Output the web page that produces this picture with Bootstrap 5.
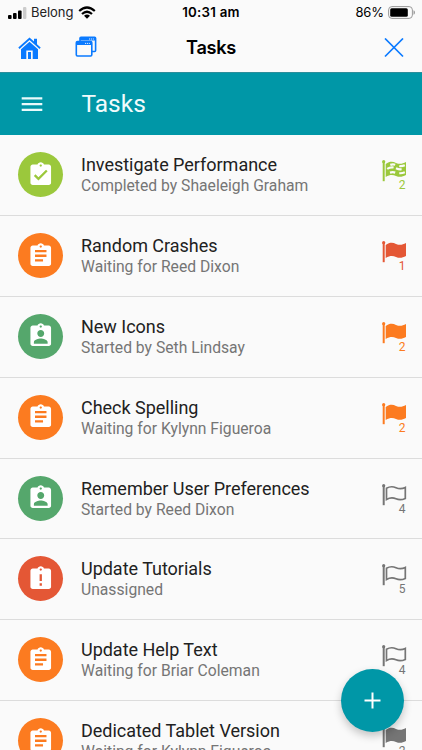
<!DOCTYPE html>
<html lang="en">
<head>
<meta charset="utf-8">
<meta name="viewport" content="width=device-width, initial-scale=1">
<title>Tasks</title>
<link href="https://cdn.jsdelivr.net/npm/bootstrap@5.3.0/dist/css/bootstrap.min.css" rel="stylesheet">
<style>
html,body{height:100%;overflow:hidden}
body{font-family:Roboto,sans-serif;background:#fafafa;color:#212121}
svg{display:block;flex:none}
.screen{height:750px;overflow:hidden}
.ios{font-family:Inter,sans-serif;color:#000}
.statusbar{height:24px;padding:1px 7px 0 8px;font-size:13px}
.carrier{letter-spacing:-.05px;color:#222;margin:0 5px 0 4px}
.clock{font-weight:600;font-size:13.3px;letter-spacing:.25px;left:0;right:0;top:2.5px}
.battery-level{letter-spacing:-.1px}
.titlebar{height:48px;padding:0 18px;color:#0a7aff}
.bar-title{font-weight:600;font-size:18.2px;letter-spacing:-.3px;color:#000;left:0;right:0;top:10px}
.appbar{height:63px;background:#0097a7;padding-left:20px;box-shadow:inset 0 1px #2b8e9b}
.app-title{font-size:24.5px;line-height:1;margin-left:37.5px;padding-top:1px;color:#f1fbfc}
.task{height:80.9px;padding:0 15.500px 1px 18px;border-bottom:1.4px solid #dcdcdc}
.disc{width:45px;height:45px;flex:none}
.task-text{margin-left:18px;flex:1;margin-top:1px}
.task-name{font-size:18px;line-height:21px;letter-spacing:-.02px;white-space:nowrap}
.task-state{font-size:15.7px;line-height:21px;color:#757575;white-space:nowrap}
.flag{width:25px;height:32px;margin-top:3px}
.count{font-size:12px;line-height:12px;margin-top:-3px;text-align:right;padding-right:1px}
.done{background:#9bc83c}.waiting{background:#fc7b20}.started{background:#55a76c}.late{background:#e45735}
.c-done{color:#9bc83c}.c-red{color:#e45735}.c-orange{color:#fc7b20}.c-gray{color:#757575}
.windows-icon{left:75px;top:12px}
.fab{width:63px;height:63px;right:18.5px;top:668.5px;background:#0097a7;border:0;color:#fff;box-shadow:0 4px 8px rgba(0,0,0,.22)}
</style>
<script src="https://cdn.jsdelivr.net/npm/bootstrap@5.3.0/dist/js/bootstrap.bundle.min.js"></script>
</head>
<body>
<svg width="0" height="0" class="position-absolute">
<defs>
<symbol id="i-list" viewBox="0 0 24 24"><path d="M19 3h-4.180C14.400 1.840 13.300 1 12 1c-1.300 0-2.400.84-2.820 2H5c-1.100 0-2 .9-2 2v14c0 1.100.9 2 2 2h14c1.100 0 2-.9 2-2V5c0-1.100-.9-2-2-2zm-7 0c.55 0 1 .45 1 1s-.45 1-1 1-1-.45-1-1 .45-1 1-1zm2 14H7v-2h7v2zm3-4H7v-2h10v2zm0-4H7V7h10v2z"/></symbol>
<symbol id="i-check" viewBox="0 0 24 24"><path d="M19 3h-4.180C14.400 1.840 13.300 1 12 1c-1.300 0-2.400.84-2.820 2H5c-1.100 0-2 .9-2 2v14c0 1.100.9 2 2 2h14c1.100 0 2-.9 2-2V5c0-1.100-.9-2-2-2zm-7 0c.55 0 1 .45 1 1s-.45 1-1 1-1-.45-1-1 .45-1 1-1zm-2 14l-4-4 1.410-1.410L10 14.170l6.590-6.590L18 9l-8 8z"/></symbol>
<symbol id="i-user" viewBox="0 0 24 24"><path d="M19 3h-4.180C14.400 1.840 13.300 1 12 1c-1.300 0-2.400.84-2.820 2H5c-1.100 0-2 .9-2 2v14c0 1.100.9 2 2 2h14c1.100 0 2-.9 2-2V5c0-1.100-.9-2-2-2zm-7 0c.55 0 1 .45 1 1s-.45 1-1 1-1-.45-1-1 .45-1 1-1zm0 4c1.660 0 3 1.340 3 3s-1.340 3-3 3-3-1.340-3-3 1.340-3 3-3zm6 12H6v-1.400c0-2 4-3.100 6-3.100s6 1.100 6 3.100V19z"/></symbol>
<symbol id="i-late" viewBox="0 0 24 24"><path d="M19 3h-4.180C14.400 1.840 13.300 1 12 1c-1.300 0-2.400.84-2.820 2H5c-1.100 0-2 .9-2 2v14c0 1.100.9 2 2 2h14c1.100 0 2-.9 2-2V5c0-1.100-.9-2-2-2zm-6 15h-2v-2h2v2zm0-4h-2V8h2v6zm-1-9c-.55 0-1-.45-1-1s.45-1 1-1 1 .45 1 1-.45 1-1 1z"/></symbol>
<symbol id="f-pole" viewBox="0 0 25 22"><circle cx="1.700" cy="1.700" r="1.600"/><path d="M.7 2h2v19.200h-2z"/></symbol>
<symbol id="f-solid" viewBox="0 0 25 22"><use href="#f-pole" width="25" height="22"/><path d="M3.700 4C8 .9 11 1.600 14 2.900s6 1.500 10-.8v13c-4 2.200-7 2.100-10 .8s-6-1.500-10.300 1z"/></symbol>
<symbol id="f-line" viewBox="0 0 25 22"><use href="#f-pole" width="25" height="22"/><path fill="none" stroke="currentColor" stroke-width="1.700" d="M4.500 4.300C8.300 2 11 2.400 14 3.700s6 1.400 9.300-.3v11c-3.800 1.800-6.300 1.700-9.300.4s-6-1.300-9.500.7z"/></symbol>
<symbol id="f-check" viewBox="0 0 25 22"><use href="#f-solid" width="25" height="22"/><g fill="none" stroke="#fafafa" stroke-width="2.200"><path d="M8.300 4.900Q10.800 4 13.200 4.800M5.200 8.900Q8.300 6.900 11.600 7.500M8 12.600Q10.800 11.700 13.200 12.600M14 8.200Q17 9.600 19.600 9.200M17.300 6Q19.800 6.500 22.800 5.300M17.300 13.200Q19.800 13.500 22.800 12.300"/></g></symbol>
</defs>
</svg>
<div class="screen position-relative">
<header class="ios">
<div class="statusbar d-flex align-items-center position-relative">
<svg width="19" height="12" viewBox="0 0 19 12"><rect y="8" width="3.600" height="4" rx="1"/><rect x="5" y="6" width="3.600" height="6" rx="1"/><rect x="10" y="3.500" width="3.600" height="8.500" rx="1"/><rect x="15" width="3.400" height="12" rx="1" fill="#ccc"/></svg>
<span class="carrier">Belong</span>
<svg width="18" height="13" viewBox="0 0 18 13"><g fill="none" stroke="#000" stroke-width="2.200"><path d="M1.200 5Q9-2 16.800 5M4 8Q9 3.500 14 8"/></g><path d="M6 9.800Q9 7.200 12 9.800L9 12.800z"/></svg>
<div class="clock position-absolute text-center">10:31 am</div>
<span class="battery-level ms-auto me-1">86%</span>
<svg width="27" height="13" viewBox="0 0 27 13"><rect x=".6" y=".6" width="23.800" height="11.800" rx="3.300" fill="none" stroke="#999"/><rect x="2.200" y="2.200" width="17.600" height="8.600" rx="1.500"/><path d="M25.500 4.200q1.500.6 1.500 2.300t-1.500 2.300z" fill="#999"/></svg>
</div>
<div class="titlebar d-flex align-items-center justify-content-between position-relative">
<svg width="23" height="23" viewBox="0 0 23 23" fill="currentColor"><path d="M11.500.5l4.500 4V1.700h3v5.500l3.700 3.400-1.200 1.400-10-9-10 9L.3 10.600z"/><path fill-rule="evenodd" d="M11.500 4.700L20 12.200V22h-5.300v-8.600H8.300V22H3V12.200zM10 15h3v7h-3z"/></svg>
<svg class="windows-icon position-absolute" width="22" height="22" viewBox="0 0 22 22" fill="none" stroke="currentColor" stroke-width="1.600"><path d="M5 5V2.200q0-1 1-1H19.600q1 0 1 1V14.500q0 1-1 1H17"/><rect x="1.300" y="5.500" width="15.500" height="14.500" rx="1.200"/><path d="M1.300 7.400h15.500M5 3h15.600" stroke-width="3"/><path d="M10 7.400h5M14 3h5" stroke="#fafafa" stroke-width=".9" stroke-dasharray="1.100 .8"/></svg>
<div class="bar-title position-absolute text-center">Tasks</div>
<svg width="20" height="20" viewBox="0 0 20 20" fill="none" stroke="currentColor" stroke-width="1.700"><path d="M1 .5l18 18M19 .5L1 18.500"/></svg>
</div>
</header>
<nav class="appbar d-flex align-items-center">
<svg width="24" height="24" viewBox="0 0 24 24" fill="#e9fafb"><path d="M1.700 5.200h20.600v2.200H1.700zM1.700 11h20.600v2.200H1.700zM1.700 16.700h20.600v2.200H1.700z"/></svg>
<h1 class="app-title fw-normal mb-0">Tasks</h1>
</nav>
<main>
<div class="task d-flex align-items-center"><div class="disc done rounded-circle d-flex align-items-center justify-content-center"><svg width="27.500" height="27.500" fill="#fff"><use href="#i-check"/></svg></div><div class="task-text"><div class="task-name">Investigate Performance</div><div class="task-state">Completed by Shaeleigh Graham</div></div><div class="flag c-done"><svg width="25" height="22" fill="currentColor"><use href="#f-check"/></svg><div class="count">2</div></div></div>
<div class="task d-flex align-items-center"><div class="disc waiting rounded-circle d-flex align-items-center justify-content-center"><svg width="27.500" height="27.500" fill="#fff"><use href="#i-list"/></svg></div><div class="task-text"><div class="task-name">Random Crashes</div><div class="task-state">Waiting for Reed Dixon</div></div><div class="flag c-red"><svg width="25" height="22" fill="currentColor"><use href="#f-solid"/></svg><div class="count">1</div></div></div>
<div class="task d-flex align-items-center"><div class="disc started rounded-circle d-flex align-items-center justify-content-center"><svg width="27.500" height="27.500" fill="#fff"><use href="#i-user"/></svg></div><div class="task-text"><div class="task-name">New Icons</div><div class="task-state">Started by Seth Lindsay</div></div><div class="flag c-orange"><svg width="25" height="22" fill="currentColor"><use href="#f-solid"/></svg><div class="count">2</div></div></div>
<div class="task d-flex align-items-center"><div class="disc waiting rounded-circle d-flex align-items-center justify-content-center"><svg width="27.500" height="27.500" fill="#fff"><use href="#i-list"/></svg></div><div class="task-text"><div class="task-name">Check Spelling</div><div class="task-state">Waiting for Kylynn Figueroa</div></div><div class="flag c-orange"><svg width="25" height="22" fill="currentColor"><use href="#f-solid"/></svg><div class="count">2</div></div></div>
<div class="task d-flex align-items-center"><div class="disc started rounded-circle d-flex align-items-center justify-content-center"><svg width="27.500" height="27.500" fill="#fff"><use href="#i-user"/></svg></div><div class="task-text"><div class="task-name">Remember User Preferences</div><div class="task-state">Started by Reed Dixon</div></div><div class="flag c-gray"><svg width="25" height="22" fill="currentColor"><use href="#f-line"/></svg><div class="count">4</div></div></div>
<div class="task d-flex align-items-center"><div class="disc late rounded-circle d-flex align-items-center justify-content-center"><svg width="27.500" height="27.500" fill="#fff"><use href="#i-late"/></svg></div><div class="task-text"><div class="task-name">Update Tutorials</div><div class="task-state">Unassigned</div></div><div class="flag c-gray"><svg width="25" height="22" fill="currentColor"><use href="#f-line"/></svg><div class="count">5</div></div></div>
<div class="task d-flex align-items-center"><div class="disc waiting rounded-circle d-flex align-items-center justify-content-center"><svg width="27.500" height="27.500" fill="#fff"><use href="#i-list"/></svg></div><div class="task-text"><div class="task-name">Update Help Text</div><div class="task-state">Waiting for Briar Coleman</div></div><div class="flag c-gray"><svg width="25" height="22" fill="currentColor"><use href="#f-line"/></svg><div class="count">4</div></div></div>
<div class="task d-flex align-items-center"><div class="disc waiting rounded-circle d-flex align-items-center justify-content-center"><svg width="27.500" height="27.500" fill="#fff"><use href="#i-list"/></svg></div><div class="task-text"><div class="task-name">Dedicated Tablet Version</div><div class="task-state">Waiting for Kylynn Figueroa</div></div><div class="flag c-gray"><svg width="25" height="22" fill="currentColor"><use href="#f-solid"/></svg><div class="count">2</div></div></div>
</main>
<button class="fab rounded-circle position-absolute d-flex align-items-center justify-content-center p-0" aria-label="Add task"><svg width="17" height="17" viewBox="0 0 17 17" fill="none" stroke="#fff" stroke-width="2"><path d="M8.500.5v16M.5 8.500h16"/></svg></button>
</div>
</body>
</html>
